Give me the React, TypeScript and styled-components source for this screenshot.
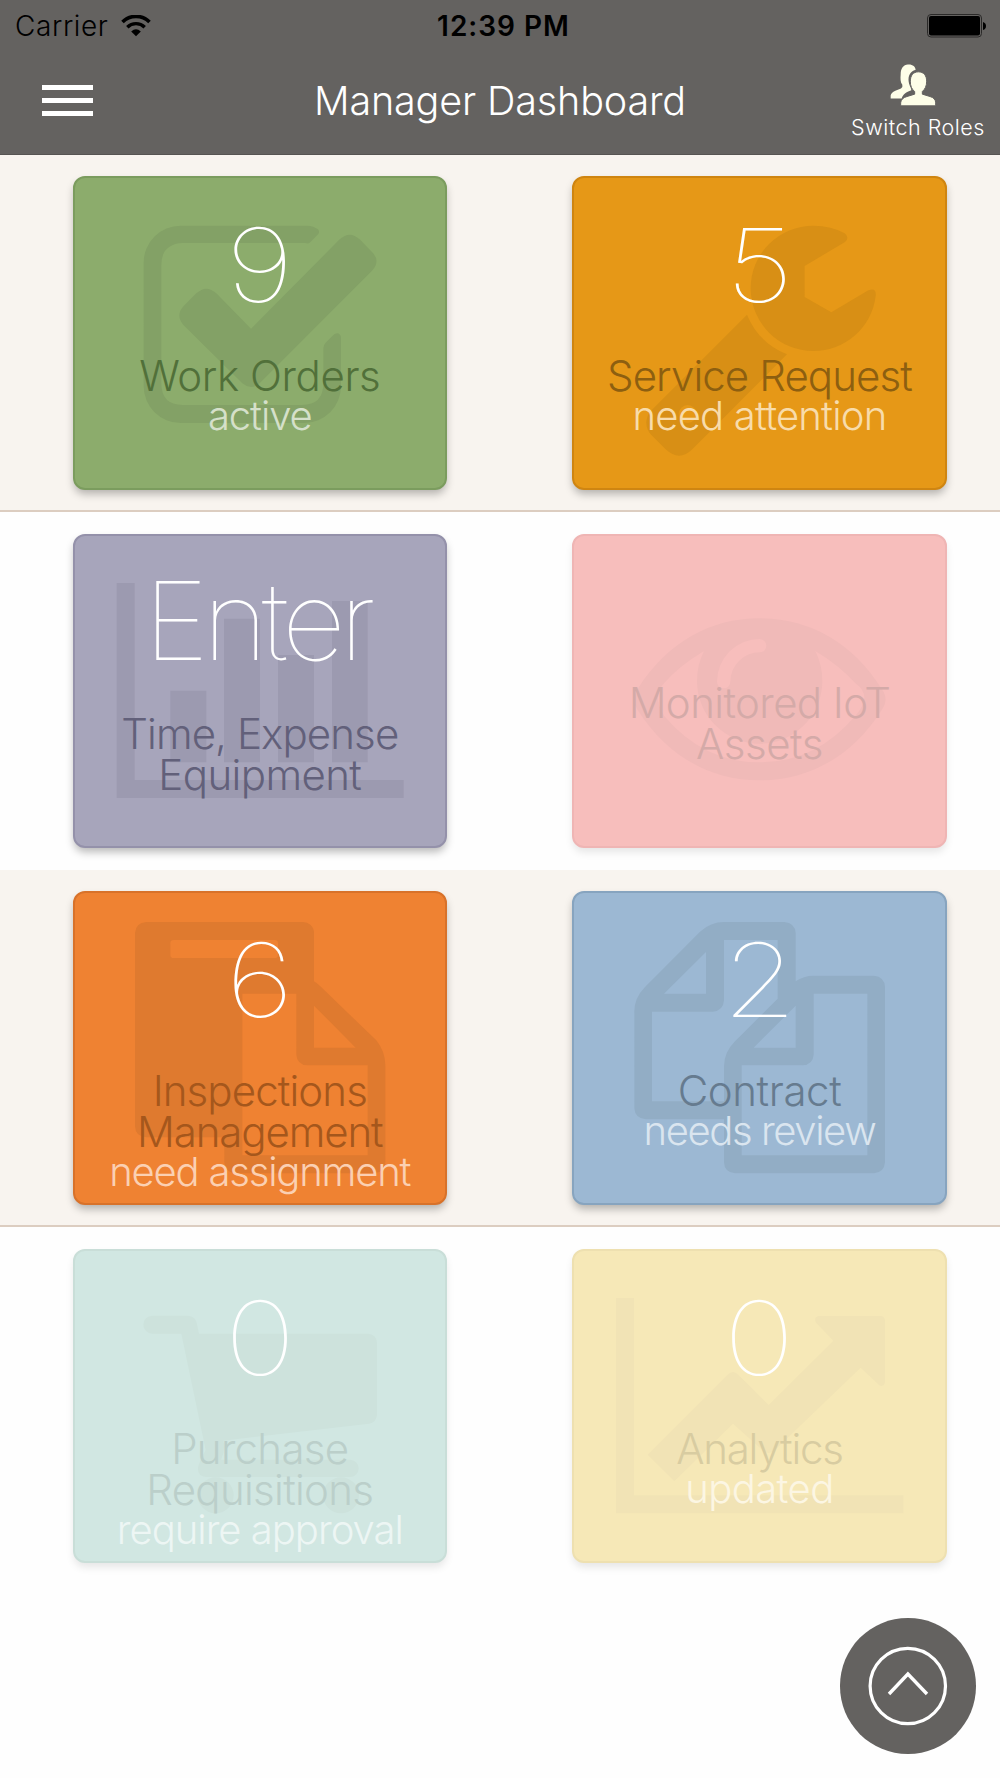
import React from 'react';
import styled, { createGlobalStyle } from 'styled-components';

interface TileData {
  count?: string;
  isWord?: boolean;
  title: string[];
  titleSpacing: number[];
  sub?: string;
  subSpacing?: number;
  color: string;
  border: string;
  iconColor: string;
  titleColor: string;
  subColor?: string;
  faded?: boolean;
  viewBox: string;
  icon: string;
}

const rows: TileData[][] = [
  [
    {
      count: '9',
      title: ['Work Orders'],
      titleSpacing: [-0.4],
      sub: 'active',
      subSpacing: -1.1,
      color: '#8cac6c',
      border: '#7b9c5e',
      iconColor: '#83a166',
      titleColor: '#51703a',
      subColor: '#d5e0ca',
      viewBox: '68 48 1122 942',
      icon: 'M392 197H770Q790 198 803 208Q809 214 804 222L778 248Q774 252 765 249H397Q333 252 333 315V670Q333 735 397 735H755Q819 735 819 670V565Q819 555 826 548L846 528Q854 518 863 520Q872 524 872 535V678A111 111 0 0 1 761 789H391A111 111 0 0 1 280 678V308A111 111 0 0 1 391 197ZM602 506L868 238Q898 210 928 238L965 276Q992 303 965 332L628 670Q602 692 576 670L400 496Q374 466 400 438L438 400Q468 372 498 400Z',
    },
    {
      count: '5',
      title: ['Service Request'],
      titleSpacing: [-0.9],
      sub: 'need attention',
      subSpacing: -0.8,
      color: '#e69817',
      border: '#cf8511',
      iconColor: '#d88f15',
      titleColor: '#8d5f10',
      subColor: '#f8dcab',
      viewBox: '66 48 1122 942',
      icon: 'M790 197Q845 197 884 220Q900 232 885 246L764 318V411L844 457L955 391Q980 381 977 408C965 505 885 573 790 573A188 188 0 0 1 790 197ZM591 464Q625 548 711 583L427 868Q388 906 347 868L302 823Q277 790 300 755ZM413 735A27 27 0 0 1 413 789A27 27 0 0 1 413 735Z',
    },
  ],
  [
    {
      count: 'Enter',
      isWord: true,
      title: ['Time, Expense', 'Equipment'],
      titleSpacing: [-0.9, -0.6],
      color: '#a7a5bb',
      border: '#9491aa',
      iconColor: '#9c9ab0',
      titleColor: '#62607a',
      viewBox: '68 42 1122 942',
      icon: 'M199 189H253V780H1060V834H199ZM360 512H468V727H360ZM521 296H629V727H521ZM683 405H791V727H683ZM845 243H952V727H845Z',
    },
    {
      title: ['Monitored IoT', 'Assets'],
      titleSpacing: [-0.6, -0.5],
      color: '#f7bebc',
      border: '#efb5b4',
      iconColor: '#f0bab8',
      titleColor: '#d4aaa8',
      faded: true,
      viewBox: '66 42 1122 942',
      icon: 'M629 295C780 295 910 370 995 507Q1018 538 995 570C910 706 780 781 629 781C478 781 350 706 263 570Q242 538 263 507C350 370 478 295 629 295ZM462 393Q387 438 342 490Q306 528 342 587Q460 727 629 727T916 587Q970 528 916 490Q870 438 796 393Q817 435 817 483A188 188 0 0 1 441 483Q441 435 462 393ZM629 357A20 20 0 0 1 629 397A88 88 0 0 0 541 485A20 20 0 0 1 501 485A128 128 0 0 1 629 357Z',
    },
  ],
  [
    {
      count: '6',
      title: ['Inspections', 'Management'],
      titleSpacing: [-0.9, -1.1],
      sub: 'need assignment',
      subSpacing: -1.2,
      color: '#ef8232',
      border: '#d8722a',
      iconColor: '#df7a2f',
      titleColor: '#a5571c',
      subColor: '#fbd0b2',
      viewBox: '68 64 1122 942',
      icon: 'M288 157H757A33 33 0 0 1 791 190V335Q800 340 810 350L978 512Q1004 545 1005 585V878Q1003 908 972 911H555Q523 908 522 878V803H288Q255 801 254 770V190Q256 159 288 157ZM370 211H673Q683 211 683 221V255Q683 265 673 265H370Q360 265 360 255V221Q360 211 370 211ZM576 372H738V555Q740 585 771 587H952V857H576ZM791 408V534H916Z',
    },
    {
      count: '2',
      title: ['Contract'],
      titleSpacing: [-0.4],
      sub: 'needs review',
      subSpacing: -1.4,
      color: '#9cb8d3',
      border: '#87a4bf',
      iconColor: '#92adc5',
      titleColor: '#667b8f',
      subColor: '#dae5ef',
      viewBox: '66 64 1122 942',
      icon: 'M522 157H703Q735 160 737 190V335Q760 318 792 318H972Q1003 321 1005 352V878Q1003 908 972 911H555Q523 908 522 878V749H288Q255 747 253 716V425Q253 385 285 352L450 186Q482 157 522 157ZM468 247V372H342ZM522 211H683V387L555 515Q522 548 522 590V695H306V426H488Q520 424 522 392ZM737 408V534H611ZM791 372H952V857H575V587H757Q789 585 791 555Z',
    },
  ],
  [
    {
      count: '0',
      title: ['Purchase', 'Requisitions'],
      titleSpacing: [-0.7, -0.7],
      sub: 'require approval',
      subSpacing: -1,
      color: '#d1e7e2',
      border: '#c9ded8',
      iconColor: '#cde2dc',
      titleColor: '#bbcfca',
      subColor: '#edf6f4',
      faded: true,
      viewBox: '68 57 1122 942',
      icon: 'M306 257H412Q436 258 440 283L446 311H953A27 27 0 0 1 980 338V554Q978 577 956 581L519 632Q526 660 512 689H899A26 26 0 0 1 899 741H468Q441 740 443 712Q447 695 466 660L393 311H306A27 27 0 0 1 306 257ZM496 742A54 54 0 0 1 496 850A54 54 0 0 1 496 742ZM872 742A54 54 0 0 1 872 850A54 54 0 0 1 872 742Z',
    },
    {
      count: '0',
      title: ['Analytics'],
      titleSpacing: [-1.2],
      sub: 'updated',
      subSpacing: -0.6,
      color: '#f6e8b7',
      border: '#eee0b0',
      iconColor: '#f1e3b5',
      titleColor: '#d8cca1',
      subColor: '#fcf6e3',
      faded: true,
      viewBox: '66 57 1122 942',
      icon: 'M198 204H252V796H1060V850H198ZM806 258H990Q1005 258 1005 273V457Q1002 472 988 466L932 413L675 660Q656 678 637 660L549 581L373 754L293 674L533 434Q549 418 565 434L656 525L850 332L798 278Q790 262 806 258Z',
    },
  ],
];

const Tile = ({ tile }: { tile: TileData }) => {
  return (
    <TileBox $bg={tile.color} $border={tile.border} $faded={tile.faded}>
      <TileIcon viewBox={tile.viewBox}>
        <path d={tile.icon} fill={tile.iconColor} fillRule="evenodd" />
      </TileIcon>
      <TileText>
        {tile.count ? <Count $word={tile.isWord}>{tile.count}</Count> : <NoCount />}
        {tile.title.map((line, i) => (
          <Title key={line} $color={tile.titleColor} $spacing={tile.titleSpacing[i]}>
            {line}
          </Title>
        ))}
        {tile.sub && (
          <Sub $color={tile.subColor} $spacing={tile.subSpacing}>
            {tile.sub}
          </Sub>
        )}
      </TileText>
    </TileBox>
  );
};

const App = () => {
  return (
    <Screen>
      <GlobalStyle />
      <Header>
        <StatusBar>
          <Carrier>
            Carrier
            <svg width="30" height="22" viewBox="0 0 30 22">
              <path d="M1.5 7A19 19 0 0 1 28.5 7" fill="none" stroke="#000" strokeWidth="3.6" />
              <path d="M6.3 12.2A12.4 12.4 0 0 1 23.7 12.2" fill="none" stroke="#000" strokeWidth="3.4" />
              <path d="M15 21.2L10.2 16.4Q15 12.2 19.8 16.4Z" />
            </svg>
          </Carrier>
          <Clock>12:39 PM</Clock>
          <Battery>
            <svg width="60" height="24" viewBox="0 0 60 24">
              <rect x="0.5" y="0.5" width="54" height="22.5" rx="3.5" fill="none" stroke="#2a2928" />
              <rect x="2" y="2" width="51" height="19.5" rx="2" />
              <path d="M56 8Q59 9 59 12T56 16Z" />
            </svg>
          </Battery>
        </StatusBar>
        <NavBar>
          <MenuButton>
            <i />
            <i />
            <i />
          </MenuButton>
          <Heading>Manager Dashboard</Heading>
          <SwitchRoles>
            <svg width="46" height="43" viewBox="0 0 138 128">
              <path
                d="M54 1C68 0 76 7 77 17C60 22 54 36 56 52C57 61 60 66 62 70L64 78C48 83 39 90 35 103H2V94Q3 86 16 80L33 73Q39 70 37 62C31 54 31 44 32 31C32 12 40 2 54 1Z"
                fill="#fefee8"
              />
              <path
                d="M85 23C101 23 110 34 110 51C110 66 105 75 97 82V90L120 97Q137 102 137 116V125H32V116Q33 102 51 97L74 90V82C65 75 61 66 61 51C61 34 70 23 85 23Z"
                fill="#fefee8"
                stroke="#646260"
                strokeWidth="3"
              />
            </svg>
            <span>Switch Roles</span>
          </SwitchRoles>
        </NavBar>
      </Header>
      {rows.map((row, i) => (
        <Row key={i} $shaded={i % 2 === 0}>
          {row.map((tile) => (
            <Tile key={tile.title[0]} tile={tile} />
          ))}
        </Row>
      ))}
      <UpButton>
        <svg width="136" height="136" viewBox="0 0 136 136" fill="none" stroke="#fff">
          <circle cx="67.8" cy="68" r="37.7" strokeWidth="3.2" />
          <path d="M49 76L67.9 56L87 76" strokeWidth="3.4" />
        </svg>
      </UpButton>
    </Screen>
  );
};

export default App;

const GlobalStyle = createGlobalStyle`
  body {
    margin: 0;
    background: #fefefe;
    font-family: Inter, 'Liberation Sans', sans-serif;
  }
`;

const Screen = styled.div`
  position: relative;
  height: 1778px;
  overflow: hidden;
`;

const Header = styled.header`
  height: 154.7px;
  box-sizing: border-box;
  background: #646260;
  border-bottom: 1.5px solid #565452;
`;

const StatusBar = styled.div`
  display: grid;
  grid-template-columns: 1fr auto 1fr;
  align-items: center;
  height: 50px;
  padding: 0 13px 0 15px;
  font-size: 28px;
  color: #000;
`;

const Carrier = styled.div`
  display: flex;
  align-items: center;
  gap: 12px;
  font-weight: 300;
  letter-spacing: 0.6px;
  line-height: 52px;
`;

const Clock = styled.div`
  padding-left: 5px;
  font-weight: 600;
  line-height: 52px;
  letter-spacing: 1px;
`;

const Battery = styled.div`
  display: flex;
  justify-content: flex-end;
`;

const NavBar = styled.div`
  display: grid;
  grid-template-columns: 200px 1fr 200px;
  height: 104px;
  color: #fff;
`;

const MenuButton = styled.div`
  display: flex;
  flex-direction: column;
  gap: 8px;
  padding: 35px 0 0 42px;

  i {
    width: 51px;
    height: 5px;
    background: #fff;
  }
`;

const Heading = styled.h1`
  margin: 0;
  font-size: 39.5px;
  line-height: 102px;
  font-weight: 300;
  letter-spacing: -0.15px;
  text-align: center;
  white-space: nowrap;
`;

const SwitchRoles = styled.div`
  display: flex;
  flex-direction: column;
  align-items: center;
  padding: 14px 14px 0 50px;
  font-size: 21.5px;
  line-height: 40px;
  font-weight: 300;
  letter-spacing: 0.5px;
  white-space: nowrap;

  svg {
    margin-right: 11px;
  }
`;

const Row = styled.section<{ $shaded: boolean }>`
  display: grid;
  grid-template-columns: 374.4px 374.4px;
  column-gap: 125.3px;
  box-sizing: border-box;
  height: 357.5px;
  padding: 21.5px 0 0 72.6px;
  background: ${(p) => (p.$shaded ? '#f8f4ef' : '#fefefe')};
  border-bottom: ${(p) => (p.$shaded ? '2px solid #dccdc0' : 'none')};
`;

const TileBox = styled.div<{ $bg: string; $border: string; $faded?: boolean }>`
  position: relative;
  box-sizing: border-box;
  height: 314px;
  border: 2px solid ${(p) => p.$border};
  border-radius: 12px;
  background: ${(p) => p.$bg};
  box-shadow: 0 5px 9px -1px rgba(0, 0, 0, ${(p) => (p.$faded ? 0.1 : 0.28)});
`;

const TileIcon = styled.svg`
  position: absolute;
  top: -2px;
  left: -2px;
  width: 374px;
  height: 314px;
`;

const TileText = styled.div`
  position: relative;
  display: flex;
  flex-direction: column;
  align-items: center;
  white-space: nowrap;
`;

const Count = styled.div<{ $word?: boolean }>`
  height: 177px;
  font-size: ${(p) => (p.$word ? 108 : 102)}px;
  line-height: ${(p) => (p.$word ? 170 : 174)}px;
  font-weight: 100;
  letter-spacing: ${(p) => (p.$word ? -5.8 : 0)}px;
  transform: ${(p) => (p.$word ? 'translateX(-3px) scaleX(1.03)' : 'scaleX(1.18)')};
  color: #fff;
`;

const NoCount = styled.div`
  height: 146px;
`;

const Title = styled.div<{ $color: string; $spacing: number }>`
  font-size: 42px;
  line-height: 41px;
  font-weight: 300;
  letter-spacing: ${(p) => p.$spacing}px;
  color: ${(p) => p.$color};
`;

const Sub = styled.div<{ $color?: string; $spacing?: number }>`
  font-size: 40px;
  line-height: 39px;
  font-weight: 300;
  letter-spacing: ${(p) => p.$spacing || 0}px;
  color: ${(p) => p.$color};
`;

const UpButton = styled.div`
  position: absolute;
  top: 1618px;
  left: 840.4px;
  width: 135.6px;
  height: 135.6px;
  border-radius: 50%;
  background: #646260;
`;
